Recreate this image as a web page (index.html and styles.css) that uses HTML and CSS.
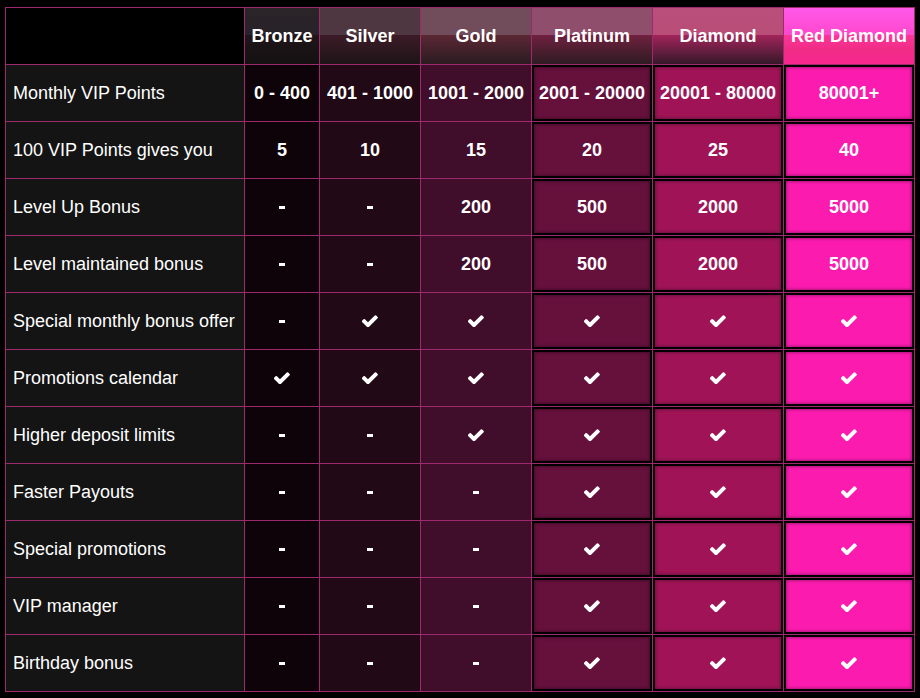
FILE: index.html
```html
<!DOCTYPE html>
<html lang="en">
<head>
<meta charset="utf-8">
<title>VIP Levels</title>
<link rel="stylesheet" href="styles.css">
</head>
<body>
<svg class="defs" width="0" height="0" aria-hidden="true">
  <symbol id="chk" viewBox="140 380 1540 1030">
    <path d="M1671 566q0 40-28 68l-724 724-136 136q-28 28-68 28t-68-28l-136-136-362-362q-28-28-28-68t28-68l136-136q28-28 68-28t68 28l294 295 656-657q28-28 68-28t68 28l136 136q28 28 28 68z" fill="#fff"/>
  </symbol>
</svg>
<div class="vip" id="vip"></div>
<script src="app.js"></script>
</body>
</html>
```
FILE: app.js
```js
const tiers = ["Bronze","Silver","Gold","Platinum","Diamond","Red Diamond"];
const cls = ["bronze","silver","gold","platinum","diamond","red"];
const rows = [
  ["Monthly VIP Points", ["0 - 400","401 - 1000","1001 - 2000","2001 - 20000","20001 - 80000","80001+"]],
  ["100 VIP Points gives you", ["5","10","15","20","25","40"]],
  ["Level Up Bonus", ["-","-","200","500","2000","5000"]],
  ["Level maintained bonus", ["-","-","200","500","2000","5000"]],
  ["Special monthly bonus offer", ["-","v","v","v","v","v"]],
  ["Promotions calendar", ["v","v","v","v","v","v"]],
  ["Higher deposit limits", ["-","-","v","v","v","v"]],
  ["Faster Payouts", ["-","-","-","v","v","v"]],
  ["Special promotions", ["-","-","-","v","v","v"]],
  ["VIP manager", ["-","-","-","v","v","v"]],
  ["Birthday bonus", ["-","-","-","v","v","v"]]
];
const root = document.getElementById("vip");
let html = '<div class="cell head corner"></div>';
tiers.forEach((t,i)=>{ html += `<div class="cell head h-${cls[i]}">${t}</div>`; });
rows.forEach(([label, vals])=>{
  html += `<div class="cell label">${label}</div>`;
  vals.forEach((v,i)=>{
    let inner;
    if (v === "v") inner = '<svg class="check" width="16" height="12"><use href="#chk"/></svg>';
    else if (v === "-") inner = '<span class="dash"></span>';
    else inner = v;
    html += `<div class="cell val c-${cls[i]}">${inner}</div>`;
  });
});
root.innerHTML = html;
```
FILE: styles.css
```css
* { box-sizing: border-box; }
html, body { margin: 0; padding: 0; background: #000; }
body { padding: 7px 0 0 5px; font-family: "Liberation Sans", Arial, sans-serif; }
.defs { position: absolute; }

.vip {
  display: grid;
  grid-template-columns: 238px 74px 100px 110px 120px 130px 130px;
  grid-auto-rows: 56px;
  gap: 1px;
  padding: 1px;
  width: 910px;
  background: #9c2a6c;
}

.cell {
  display: flex;
  align-items: center;
  justify-content: center;
  color: #fff;
  font-weight: bold;
  font-size: 18px;
}

.head { padding-top: 1px; }
.corner { background: #000; }
.h-bronze { background: linear-gradient(#2b2528 0, #28222a 48%, #1f1619 48%, #141012 100%); }
.h-silver { background: linear-gradient(#4f3741 0, #4f3741 48%, #3c1b26 48%, #1e1418 100%); }
.h-gold { background: linear-gradient(#714c5b 0, #714c5b 48%, #5c2834 48%, #2a1b21 100%); }
.h-platinum { background: linear-gradient(#8f4e6b 0, #8f4e6b 48%, #70213f 48%, #2e1b22 100%); }
.h-diamond { background: linear-gradient(#b94f7a 0, #b84e78 48%, #a3245a 48%, #35192a 100%); }
.h-red { background: linear-gradient(#ff58ea 0, #ff48cc 48%, #fb3698 48%, #f02c86 75%, #f72690 100%); }

.label {
  justify-content: flex-start;
  padding-left: 7px;
  padding-top: 1px;
  background: #141414;
  font-weight: normal;
  font-size: 18px;
}

.c-bronze { background: #0e0308; }
.c-silver { background: #210916; }
.c-gold { background: #400e2a; }
.c-platinum { background: #66103c; }
.c-diamond { background: #a01457; }
.c-red { background: #fb1caf; }
.c-platinum, .c-diamond, .c-red {
  box-shadow: inset 0 0 0 2px #000, inset 0 0 3px 3px rgba(0,0,0,0.3);
}

.dash {
  display: block;
  width: 6px;
  height: 3px;
  background: #fff;
  margin-top: 1px;
}
.check { display: block; }
```
